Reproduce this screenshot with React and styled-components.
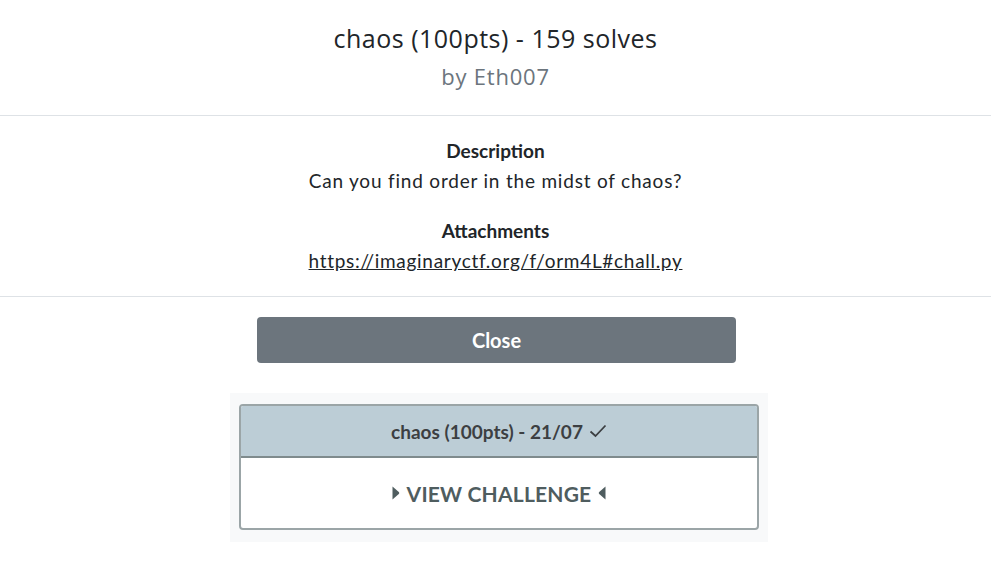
import styled, { createGlobalStyle } from "styled-components";

const GlobalStyle = createGlobalStyle`
  body {
    margin: 0;
    background: #ffffff;
    font-family: "Lato", "Noto Sans", sans-serif;
  }
`;

const Page = styled.div`
  width: 991px;
  display: flex;
  flex-direction: column;
`;

const Header = styled.div`
  display: flex;
  flex-direction: column;
  align-items: center;
  padding: 21px 0 24px;
  border-bottom: 1px solid #dee2e6;
`;

const Title = styled.h2`
  margin: 0;
  font-family: "Open Sans", sans-serif;
  font-weight: 400;
  font-size: 25px;
  letter-spacing: 0.5px;
  line-height: 34px;
  color: #212529;
`;

const Author = styled.h3`
  margin: 6px 0 0;
  font-family: "Open Sans", sans-serif;
  font-weight: 400;
  font-size: 22px;
  letter-spacing: 0.8px;
  line-height: 30px;
  color: #6c757d;
`;

const Body = styled.div`
  display: flex;
  flex-direction: column;
  align-items: center;
  padding: 20px 0 20px;
  border-bottom: 1px solid #dee2e6;
  color: #212529;
`;

const Section = styled.div`
  display: flex;
  flex-direction: column;
  align-items: center;
  margin-top: ${(p) => (p.first ? "0" : "20px")};
`;

const Label = styled.div`
  font-weight: 700;
  font-size: 19px;
  line-height: 30px;
`;

const Text = styled.div`
  font-size: 19px;
  letter-spacing: 0.8px;
  line-height: 30px;
`;

const Link = styled.a`
  font-size: 19px;
  letter-spacing: 0.7px;
  line-height: 30px;
  color: #212529;
  text-decoration: underline;
`;

const Footer = styled.div`
  display: flex;
  flex-direction: column;
  align-items: center;
  padding-top: 20px;
`;

const CloseButton = styled.button`
  width: 479px;
  height: 46px;
  margin-left: 2px;
  border: none;
  border-radius: 4px;
  background: #6c757d;
  color: #ffffff;
  font-family: "Lato", sans-serif;
  font-weight: 700;
  font-size: 20px;
  cursor: pointer;
`;

const CardWrap = styled.div`
  margin-top: 30px;
  margin-left: 7px;
  width: 538px;
  box-sizing: border-box;
  padding: 11px 9px 12px 9px;
  background: #f8f9fa;
`;

const Card = styled.div`
  border: 2px solid #9ba5a7;
  border-radius: 4px;
  background: #ffffff;
  overflow: hidden;
`;

const CardHead = styled.div`
  height: 50px;
  display: flex;
  align-items: center;
  justify-content: center;
  gap: 6px;
  background: #bccdd6;
  border-bottom: 2px solid #7f8b8d;
  font-weight: 700;
  font-size: 19px;
  color: #3c3f42;
`;

const CardBody = styled.div`
  height: 70px;
  display: flex;
  align-items: center;
  justify-content: center;
  gap: 7px;
  font-weight: 700;
  font-size: 21px;
  color: #4f5d5f;
  letter-spacing: 0.2px;
`;

const Arrow = ({ left }) => (
  <svg width="8" height="14" viewBox="0 0 8 14">
    {left ? (
      <path d="M7.5 0.5 L7.5 13.5 L1.2 8 Q0.2 7 1.2 6 Z" fill="#4f5d5f" />
    ) : (
      <path d="M0.5 0.5 L0.5 13.5 L6.8 8 Q7.8 7 6.8 6 Z" fill="#4f5d5f" />
    )}
  </svg>
);

const Check = () => (
  <svg width="18" height="14" viewBox="0 0 18 14">
    <path d="M1.5 7.5 L6.5 12 L16.5 1.5" fill="none" stroke="#3c3f42" strokeWidth="1.8" />
  </svg>
);

export default function App() {
  return (
    <Page>
      <GlobalStyle />
      <Header>
        <Title>chaos (100pts) - 159 solves</Title>
        <Author>by Eth007</Author>
      </Header>
      <Body>
        <Section first>
          <Label>Description</Label>
          <Text>Can you find order in the midst of chaos?</Text>
        </Section>
        <Section>
          <Label>Attachments</Label>
          <Link href="#">https://imaginaryctf.org/f/orm4L#chall.py</Link>
        </Section>
      </Body>
      <Footer>
        <CloseButton>Close</CloseButton>
        <CardWrap>
          <Card>
            <CardHead>
              chaos (100pts) - 21/07 <Check />
            </CardHead>
            <CardBody>
              <Arrow />
              VIEW CHALLENGE
              <Arrow left />
            </CardBody>
          </Card>
        </CardWrap>
      </Footer>
    </Page>
  );
}
